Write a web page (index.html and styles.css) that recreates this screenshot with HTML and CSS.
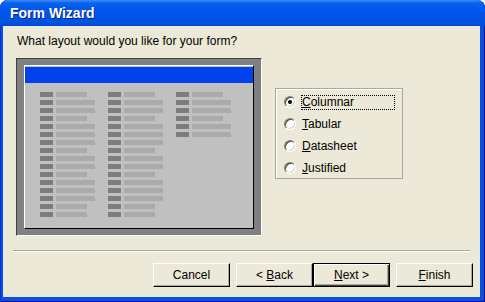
FILE: index.html
```html
<!DOCTYPE html>
<html>
<head>
    <meta charset="UTF-8">
    <title>Form Wizard</title>
    <link rel="stylesheet" href="styles.css">
</head>
<body>
  <div class="window">
    <div class="titlebar"><span class="title">Form Wizard</span></div>
    <div class="client">
      <p class="question">What layout would you like for your form?</p>
      <div class="main">
        <div class="preview">
          <div class="sheet">
            <div class="sheet-title"></div>
            <div class="fields">
              <div class="col">
                <div class="row"><i class="lb"></i><i class="fd s"></i></div>
                <div class="row"><i class="lb"></i><i class="fd"></i></div>
                <div class="row"><i class="lb"></i><i class="fd"></i></div>
                <div class="row"><i class="lb"></i><i class="fd s"></i></div>
                <div class="row"><i class="lb"></i><i class="fd"></i></div>
                <div class="row"><i class="lb"></i><i class="fd"></i></div>
                <div class="row"><i class="lb"></i><i class="fd"></i></div>
                <div class="row"><i class="lb"></i><i class="fd s"></i></div>
                <div class="row"><i class="lb"></i><i class="fd"></i></div>
                <div class="row"><i class="lb"></i><i class="fd"></i></div>
                <div class="row"><i class="lb"></i><i class="fd s"></i></div>
                <div class="row"><i class="lb"></i><i class="fd"></i></div>
                <div class="row"><i class="lb"></i><i class="fd"></i></div>
                <div class="row"><i class="lb"></i><i class="fd"></i></div>
                <div class="row"><i class="lb"></i><i class="fd s"></i></div>
                <div class="row"><i class="lb"></i><i class="fd s"></i></div>
              </div>
              <div class="col">
                <div class="row"><i class="lb"></i><i class="fd s"></i></div>
                <div class="row"><i class="lb"></i><i class="fd"></i></div>
                <div class="row"><i class="lb"></i><i class="fd"></i></div>
                <div class="row"><i class="lb"></i><i class="fd s"></i></div>
                <div class="row"><i class="lb"></i><i class="fd"></i></div>
                <div class="row"><i class="lb"></i><i class="fd"></i></div>
                <div class="row"><i class="lb"></i><i class="fd"></i></div>
                <div class="row"><i class="lb"></i><i class="fd s"></i></div>
                <div class="row"><i class="lb"></i><i class="fd"></i></div>
                <div class="row"><i class="lb"></i><i class="fd"></i></div>
                <div class="row"><i class="lb"></i><i class="fd s"></i></div>
                <div class="row"><i class="lb"></i><i class="fd"></i></div>
                <div class="row"><i class="lb"></i><i class="fd"></i></div>
                <div class="row"><i class="lb"></i><i class="fd"></i></div>
                <div class="row"><i class="lb"></i><i class="fd s"></i></div>
                <div class="row"><i class="lb"></i><i class="fd s"></i></div>
              </div>
              <div class="col">
                <div class="row"><i class="lb"></i><i class="fd s"></i></div>
                <div class="row"><i class="lb"></i><i class="fd"></i></div>
                <div class="row"><i class="lb"></i><i class="fd"></i></div>
                <div class="row"><i class="lb"></i><i class="fd s"></i></div>
                <div class="row"><i class="lb"></i><i class="fd"></i></div>
                <div class="row"><i class="lb"></i><i class="fd"></i></div>
              </div>
            </div>
          </div>
        </div>
        <div class="options">
          <div class="opt"><span class="radio checked"></span><span class="text focus"><u>C</u>olumnar</span></div>
          <div class="opt"><span class="radio"></span><span class="text"><u>T</u>abular</span></div>
          <div class="opt"><span class="radio"></span><span class="text"><u>D</u>atasheet</span></div>
          <div class="opt"><span class="radio"></span><span class="text"><u>J</u>ustified</span></div>
        </div>
      </div>
      <div class="separator"></div>
      <div class="buttons">
        <button class="btn">Cancel</button>
        <button class="btn">&lt; <u>B</u>ack</button>
        <button class="btn default"><u>N</u>ext &gt;</button>
        <button class="btn"><u>F</u>inish</button>
      </div>
    </div>
  </div>
</body>
</html>
```

FILE: styles.css
```css
body {
    margin: 0;
    background: #fff;
    font-family: "Liberation Sans", Arial, sans-serif;
}

.window {
    width: 485px;
    height: 302px;
    display: flex;
    flex-direction: column;
    background: #0a4fe0;
    border-radius: 8px 8px 0 0;
    overflow: hidden;
    box-shadow: inset 1px 0 #0831d9, inset -1px 0 #00138c, inset 0 -1px #00138c;
}

/* title bar */
.titlebar {
    height: 26px;
    flex: none;
    display: flex;
    align-items: center;
    padding-left: 10px;
    background: linear-gradient(#3d8df7 0, #0a62ec 3px, #0058ee 9px, #0054e3 18px, #0050dc 24px, #0046d0 26px);
}
.title {
    color: #fff;
    font-weight: bold;
    font-size: 14px;
    text-shadow: 1px 1px #0a1e80;
}

.client {
    flex: 1;
    margin: 0 5px 5px 3px;
    background: #ece9d8;
    display: flex;
    flex-direction: column;
}
.question {
    margin: 8px 0 0 14px;
    font-size: 12px;
    line-height: 14px;
    color: #000;
}
.main {
    display: flex;
    align-items: flex-start;
    margin: 10px 0 0 13px;
}

/* preview picture */
.preview {
    width: 246px;
    height: 178px;
    box-sizing: border-box;
    border: 1px solid;
    border-color: #404040 #fff #fff #404040;
    background: #808080;
    padding: 6px 7px;
}
.sheet {
    height: 100%;
    box-sizing: border-box;
    border: 1px solid;
    border-color: #fff #000 #000 #fff;
    background: #c0c0c0;
    padding-top: 1px;
}
.sheet-title {
    height: 16px;
    background: #0043ee;
}
.fields {
    display: flex;
    gap: 13px;
    margin: 9px 0 0 15px;
}
.col {
    display: flex;
    flex-direction: column;
    gap: 3px;
}
.row {
    display: flex;
    gap: 3px;
    height: 5px;
}
.lb {
    width: 13px;
    background: #7d7d7d;
}
.fd {
    width: 39px;
    background: repeating-conic-gradient(#a2a2a2 0 25%, #b2b2b2 0 50%) 0 0 / 2px 2px;
}
.fd.s {
    width: 31px;
}

/* layout choices */
.options {
    margin: 30px 0 0 13px;
    width: 128px;
    height: 91px;
    box-sizing: border-box;
    border: 1px solid #aca899;
    box-shadow: inset 1px 1px #fff;
    padding: 2px 0 0 8px;
}
.opt {
    display: flex;
    align-items: center;
    height: 22px;
    font-size: 12px;
}
.radio {
    width: 12px;
    height: 12px;
    box-sizing: border-box;
    border-radius: 50%;
    border: 1px solid;
    border-color: #808080 #fff #fff #808080;
    background: #fff;
    box-shadow: inset 1px 1px #404040, inset -1px -1px #d4d0c8;
    margin-right: 5px;
    display: flex;
    align-items: center;
    justify-content: center;
}
.radio.checked::after {
    content: "";
    width: 4px;
    height: 4px;
    border-radius: 50%;
    background: #000;
}
.text {
    display: inline-block;
    padding: 0 1px;
    line-height: 15px;
}
.focus {
    width: 94px;
    box-sizing: border-box;
    outline: 1px dotted #000;
    outline-offset: -1px;
}

.separator {
    margin: 14px 10px 0;
    border-top: 1px solid #aca899;
    border-bottom: 1px solid #fff;
}

/* buttons */
.buttons {
    display: flex;
    justify-content: flex-end;
    margin: 11px 7px 0 0;
}
.btn {
    width: 77px;
    height: 24px;
    margin-left: 6px;
    padding: 0;
    font-family: "Liberation Sans", Arial, sans-serif;
    font-size: 12px;
    color: #000;
    background: #ece9d8;
    border: 1px solid;
    border-color: #fff #000 #000 #fff;
    box-shadow: inset -1px -1px #aca899;
}
.btn.default {
    margin-left: 0;
    border-color: #000;
    box-shadow: inset 1px 1px #fff, inset -1px -1px #404040, inset -2px -2px #aca899;
}
```
